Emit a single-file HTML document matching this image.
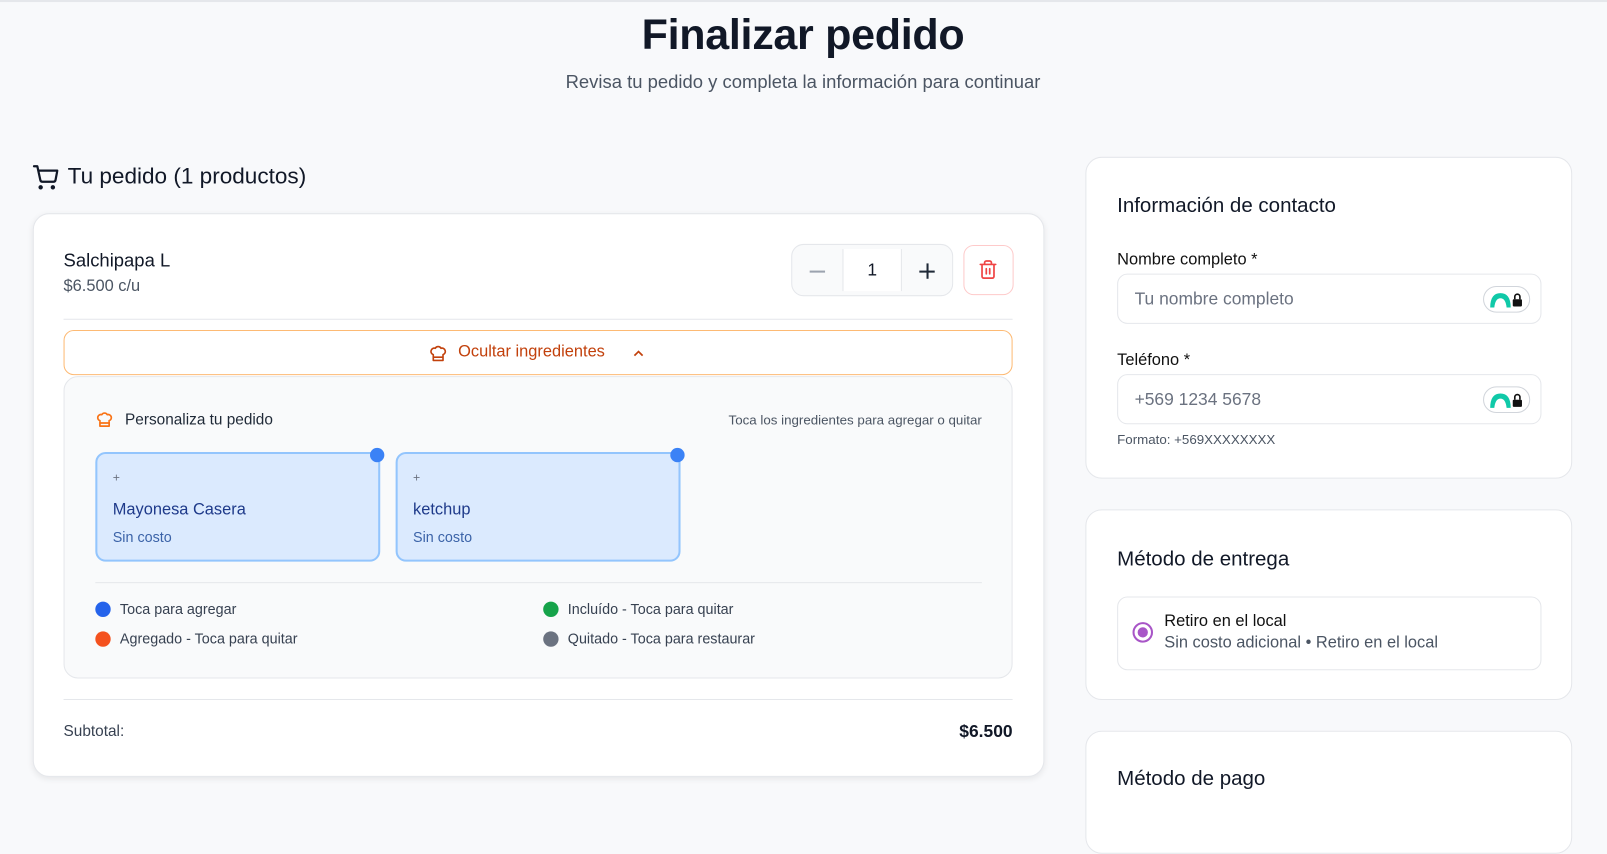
<!DOCTYPE html>
<html><head><meta charset="utf-8"><style>
*{box-sizing:border-box;margin:0;padding:0}
body{width:1607px;height:791px;overflow:hidden;background:#f8f9fb;font-family:"Liberation Sans",sans-serif;color:#111827;position:relative}
#w{position:absolute;left:0;top:0;width:1568px;height:800px;transform:scale(1.0249);transform-origin:0 0}
.a{position:absolute}
.card{position:absolute;background:#fff;border:1px solid #e5e7eb;border-radius:16px}
.lbl{font-size:16px;color:#111}
.inp{position:absolute;left:30px;width:414px;height:49px;border:1px solid #e5e7eb;border-radius:10px;font-size:17px;color:#6b7280;padding:14px 16px}
.np{position:absolute;right:10px;top:11px;width:46px;height:26px;border:1px solid #d1d5db;border-radius:13px;background:#fff}
.ing{position:absolute;top:441px;width:278px;height:107px;background:#dbeafe;border:2px solid #93c5fd;border-radius:10px}
.ing .dot{position:absolute;right:-6px;top:-6px;width:14px;height:14px;border-radius:50%;background:#3b82f6}
.dl{position:absolute;font-size:14px;color:#374151}
.dl i{position:absolute;left:-24px;top:1px;width:15px;height:15px;border-radius:50%}
</style></head><body><div id="w">
<div class="a" style="left:0;top:0;width:1568px;height:2px;background:#e5e7eb"></div>
<div class="a" style="left:0;width:1567px;top:10px;text-align:center;font-size:42px;font-weight:bold;color:#111827;letter-spacing:-0.3px">Finalizar pedido</div>
<div class="a" style="left:0;width:1567px;top:70px;text-align:center;font-size:18px;color:#4b5563">Revisa tu pedido y completa la información para continuar</div>

<svg class="a" style="left:31px;top:160px" width="26" height="26" viewBox="0 0 24 24" fill="none" stroke="#111827" stroke-width="2" stroke-linecap="round" stroke-linejoin="round"><circle cx="8" cy="21" r="1"/><circle cx="19" cy="21" r="1"/><path d="M2 2h3l2.7 12.4a2 2 0 0 0 2 1.6h9.7a2 2 0 0 0 2-1.6L23 6H6"/></svg>
<div class="a" style="left:66px;top:159px;font-size:22px;color:#111827">Tu pedido (1 productos)</div>

<div class="card" style="left:32px;top:208px;width:987px;height:550px;box-shadow:0 2px 6px rgba(0,0,0,.08)"></div>
<div class="a" style="left:62px;top:244px;font-size:18px">Salchipapa L</div>
<div class="a" style="left:62px;top:271px;font-size:16px;color:#4b5563">$6.500 c/u</div>
<div class="a" style="left:772px;top:238px;width:158px;height:51px;border:1px solid #e5e7eb;border-radius:12px;background:#f9fafb"></div>
<div class="a" style="left:822px;top:243px;width:58px;height:41px;background:#fff;border-left:1px solid #e5e7eb;border-right:1px solid #e5e7eb;text-align:center;font-size:17px;line-height:42px">1</div>
<div class="a" style="left:790px;top:264px;width:15px;height:2px;background:#9ca3af"></div>
<div class="a" style="left:897px;top:264px;width:15px;height:2px;background:#1f2937"></div>
<div class="a" style="left:903.5px;top:257px;width:2px;height:15px;background:#1f2937"></div>
<div class="a" style="left:940px;top:239px;width:49px;height:49px;border:1px solid #fecaca;border-radius:10px"></div>
<svg class="a" style="left:954px;top:253px" width="20" height="20" viewBox="0 0 24 24" fill="none" stroke="#ef4444" stroke-width="2" stroke-linecap="round"><path d="M3 6h18M19 6v14a2 2 0 0 1-2 2H7a2 2 0 0 1-2-2V6M8 6V4a2 2 0 0 1 2-2h4a2 2 0 0 1 2 2v2M10 11v6M14 11v6"/></svg>
<div class="a" style="left:62px;top:311px;width:926px;height:1px;background:#e5e7eb"></div>
<div class="a" style="left:62px;top:322px;width:926px;height:44px;border:1px solid #fdba74;border-radius:10px;background:#fff"></div>
<svg class="a" style="left:418px;top:335px" width="19" height="19" viewBox="0 0 24 24" fill="none" stroke="#c2410c" stroke-width="2" stroke-linejoin="round"><path d="M6 13.9A4 4 0 1 1 8.5 6.1a4 4 0 0 1 7 0A4 4 0 1 1 18 13.9V21H6Z M6 17h12"/></svg>
<div class="a" style="left:447px;top:335px;font-size:16px;color:#c2410c">Ocultar ingredientes</div>
<svg class="a" style="left:615px;top:337px" width="16" height="16" viewBox="0 0 24 24" fill="none" stroke="#c2410c" stroke-width="2.5"><path d="M6 15l6-6 6 6"/></svg>

<div class="a" style="left:62px;top:367px;width:926px;height:295px;border:1px solid #e5e7eb;border-radius:14px;background:#f9fafb"></div>
<svg class="a" style="left:93px;top:400px" width="18" height="18" viewBox="0 0 24 24" fill="none" stroke="#f97316" stroke-width="2.2" stroke-linejoin="round"><path d="M6 13.9A4 4 0 1 1 8.5 6.1a4 4 0 0 1 7 0A4 4 0 1 1 18 13.9V21H6Z M6 17h12"/></svg>
<div class="a" style="left:122px;top:401px;font-size:15px;color:#1f2937">Personaliza tu pedido</div>
<div class="a" style="left:600px;width:358px;top:402px;text-align:right;font-size:13px;color:#4b5563">Toca los ingredientes para agregar o quitar</div>
<div class="ing" style="left:93px"><i class="dot"></i>
<div class="a" style="left:15px;top:16px;font-size:12px;color:#6b7280">+</div>
<div class="a" style="left:15px;top:46px;font-size:16px;color:#1e3a8a">Mayonesa Casera</div>
<div class="a" style="left:15px;top:73px;font-size:14px;color:#3b63a8">Sin costo</div></div>
<div class="ing" style="left:386px"><i class="dot"></i>
<div class="a" style="left:15px;top:16px;font-size:12px;color:#6b7280">+</div>
<div class="a" style="left:15px;top:46px;font-size:16px;color:#1e3a8a">ketchup</div>
<div class="a" style="left:15px;top:73px;font-size:14px;color:#3b63a8">Sin costo</div></div>
<div class="a" style="left:93px;top:568px;width:865px;height:1px;background:#e5e7eb"></div>
<div class="dl" style="left:117px;top:586px"><i style="background:#2563eb"></i>Toca para agregar</div>
<div class="dl" style="left:117px;top:615px"><i style="background:#f4511e"></i>Agregado - Toca para quitar</div>
<div class="dl" style="left:554px;top:586px"><i style="background:#16a34a"></i>Incluído - Toca para quitar</div>
<div class="dl" style="left:554px;top:615px"><i style="background:#6b7280"></i>Quitado - Toca para restaurar</div>
<div class="a" style="left:62px;top:682px;width:926px;height:1px;background:#e5e7eb"></div>
<div class="a" style="left:62px;top:705px;font-size:15px;color:#374151">Subtotal:</div>
<div class="a" style="left:900px;width:88px;top:704px;text-align:right;font-size:17px;font-weight:bold">$6.500</div>

<div class="card" style="left:1059px;top:153px;width:475px;height:314px">
<div class="a" style="left:30px;top:36px;font-size:20px">Información de contacto</div>
<div class="a lbl" style="left:30px;top:91px">Nombre completo *</div>
<div class="inp" style="top:113px">Tu nombre completo<span class="np"><svg width="44" height="24" viewBox="0 0 44 24"><path d="M6 20 Q6 6 16 6 Q26 6 26 20 L22 20 Q21 11 16 11 Q11 11 10 20Z" fill="#10c9a8"/><rect x="28" y="12" width="9" height="7" rx="1" fill="#111"/><path d="M30 12 V9.5 a2.5 2.5 0 0 1 5 0 V12" stroke="#111" stroke-width="1.6" fill="none"/></svg></span></div>
<div class="a lbl" style="left:30px;top:189px">Teléfono *</div>
<div class="inp" style="top:211px">+569 1234 5678<span class="np"><svg width="44" height="24" viewBox="0 0 44 24"><path d="M6 20 Q6 6 16 6 Q26 6 26 20 L22 20 Q21 11 16 11 Q11 11 10 20Z" fill="#10c9a8"/><rect x="28" y="12" width="9" height="7" rx="1" fill="#111"/><path d="M30 12 V9.5 a2.5 2.5 0 0 1 5 0 V12" stroke="#111" stroke-width="1.6" fill="none"/></svg></span></div>
<div class="a" style="left:30px;top:267px;font-size:13px;color:#4b5563">Formato: +569XXXXXXXX</div>
</div>

<div class="card" style="left:1059px;top:497px;width:475px;height:186px">
<div class="a" style="left:30px;top:37px;font-size:20px">Método de entrega</div>
<div class="a" style="left:30px;top:84px;width:414px;height:72px;border:1px solid #e5e7eb;border-radius:10px">
<div class="a" style="left:14px;top:24px;width:20px;height:20px;border:2px solid #a855c7;border-radius:50%"><div style="margin:3px;width:10px;height:10px;border-radius:50%;background:#a855c7"></div></div>
<div class="a" style="left:45px;top:15px;font-size:16px;color:#111">Retiro en el local</div>
<div class="a" style="left:45px;top:36px;font-size:16px;color:#4b5563">Sin costo adicional • Retiro en el local</div>
</div></div>

<div class="card" style="left:1059px;top:713px;width:475px;height:120px">
<div class="a" style="left:30px;top:35px;font-size:20px">Método de pago</div>
</div>
</div></body></html>
